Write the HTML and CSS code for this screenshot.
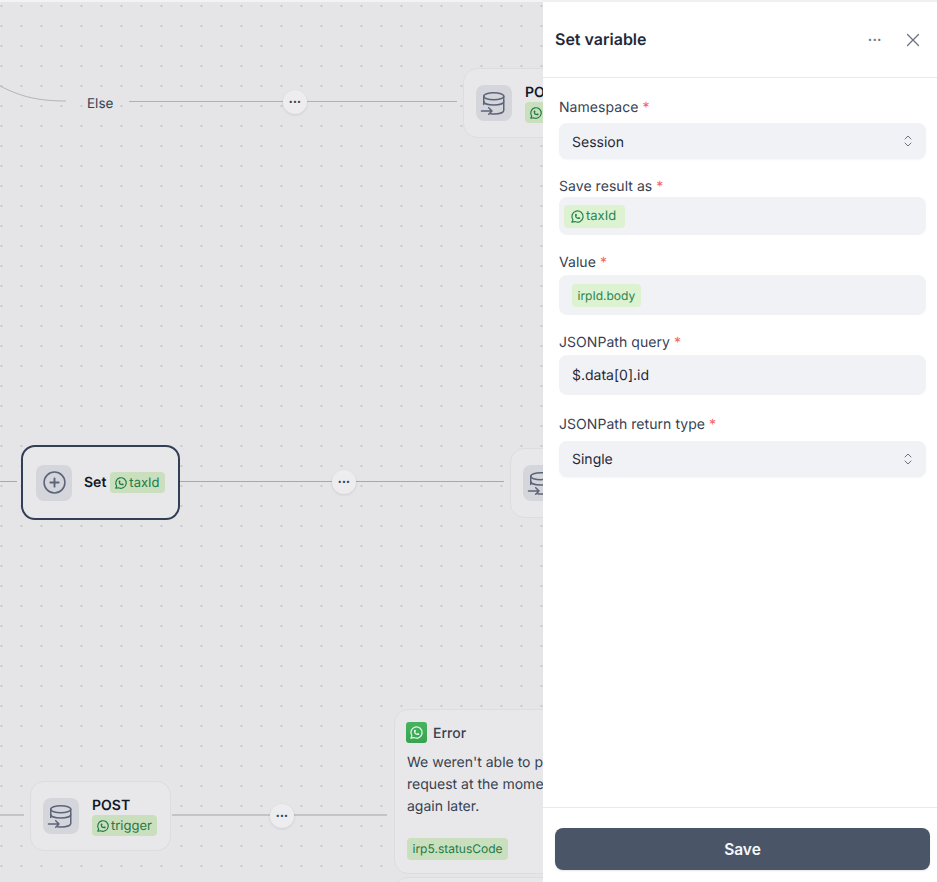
FILE: index.html
```html
<!DOCTYPE html>
<html lang="en">
<head>
<meta charset="utf-8">
<title>Set variable</title>
<link rel="stylesheet" href="styles.css">
</head>
<body>
<svg class="defs" width="0" height="0" aria-hidden="true">
  <symbol id="wa" viewBox="0 0 24 24" fill="none" stroke="currentColor" stroke-width="2" stroke-linecap="round" stroke-linejoin="round">
    <path d="M3 21l1.65-3.8a9 9 0 1 1 3.4 2.9L3 21"/>
    <path d="M9 10a.5.5 0 0 0 1 0V9a.5.5 0 0 0-1 0v1a5 5 0 0 0 5 5h1a.5.5 0 0 0 0-1h-1a.5.5 0 0 0 0 1"/>
  </symbol>
  <symbol id="db" viewBox="0 0 28 28" fill="none" stroke="currentColor" stroke-width="1.500" stroke-linecap="round" stroke-linejoin="round">
    <ellipse cx="13.750" cy="7.200" rx="10" ry="3.500"/>
    <path d="M3.750 7.200v8.300"/>
    <path d="M3.750 12.500c0 2.100 4.500 3.500 10 3.500s10-1.400 10-3.500"/>
    <path d="M23.750 7.200v14.300c0 2.100-4.500 3.500-10 3.500-1.100 0-2.200-.1-3.200-.2"/>
    <path d="M1.500 22h10.500M8.700 18.700l3.300 3.300-3.300 3.300"/>
  </symbol>
  <symbol id="updown" viewBox="0 0 12 16" fill="none" stroke="currentColor" stroke-width="1" stroke-linecap="round" stroke-linejoin="round">
    <path d="M3 6l3-3 3 3M3 10l3 3 3-3"/>
  </symbol>
</svg>
<div class="app">
  <main class="canvas">
    <svg class="wire-curve" width="70" height="30" viewBox="0 0 70 30" aria-hidden="true"><path d="M0 4C18 13 34 19 66 19" fill="none" stroke="#b4b4b9" stroke-width="1"/></svg>
    <span class="else">Else</span>
    <div class="wire wire-else"></div>
    <button class="dots-btn dots-else">&bull;&bull;&bull;</button>

    <div class="node node-post-top">
      <span class="icon-box"><svg class="db-icon"><use href="#db"/></svg></span>
      <div class="node-text"><strong class="node-title">POST</strong><span class="pill pill-dim pill-clipped"><svg class="wa-icon"><use href="#wa"/></svg></span></div>
    </div>

    <div class="wire wire-set-left"></div>
    <div class="node node-set">
      <span class="icon-box"><svg class="plus-icon" viewBox="0 0 24 24" fill="none" stroke="currentColor" stroke-width="1.500" stroke-linecap="round"><circle cx="12" cy="12" r="10"/><path d="M12 8v8M8 12h8" stroke-width="1.800"/></svg></span>
      <strong class="node-title">Set</strong>
      <span class="pill pill-dim"><svg class="wa-icon"><use href="#wa"/></svg>taxId</span>
    </div>
    <div class="wire wire-set"></div>
    <button class="dots-btn dots-set">&bull;&bull;&bull;</button>
    <div class="node node-right">
      <span class="icon-box"><svg class="db-icon"><use href="#db"/></svg></span>
    </div>

    <div class="wire wire-thick wire-post-left"></div>
    <div class="node node-post">
      <span class="icon-box"><svg class="db-icon"><use href="#db"/></svg></span>
      <div class="node-text"><strong class="node-title">POST</strong><span class="pill pill-dim"><svg class="wa-icon"><use href="#wa"/></svg>trigger</span></div>
    </div>
    <div class="wire wire-thick wire-post"></div>
    <button class="dots-btn dots-post">&bull;&bull;&bull;</button>

    <div class="node node-error">
      <div class="error-head">
        <span class="wa-badge"><svg class="wa-badge-icon"><use href="#wa"/></svg></span>
        <span class="error-title">Error</span>
      </div>
      <p class="error-body">We weren't able to process your request at the moment. Please try again later.</p>
      <span class="pill pill-dim pill-var">irp5.statusCode</span>
    </div>
    <div class="node node-next"></div>
  </main>

  <aside class="panel">
    <header class="panel-head">
      <h1 class="panel-title">Set variable</h1>
      <button class="head-btn head-dots">&bull;&bull;&bull;</button>
      <button class="head-btn head-close" aria-label="Close"><svg width="18" height="18" viewBox="0 0 18 18" fill="none" stroke="currentColor" stroke-width="1.300" stroke-linecap="round"><path d="M3.500 3.500l11 11M14.500 3.500l-11 11"/></svg></button>
    </header>
    <form class="panel-body">
      <label class="label label-first">Namespace <em>*</em></label>
      <div class="control control-select control-session"><span>Session</span><svg class="updown"><use href="#updown"/></svg></div>
      <label class="label label-save">Save result as <em>*</em></label>
      <div class="control control-tags control-save"><span class="pill"><svg class="wa-icon"><use href="#wa"/></svg>taxId</span></div>
      <label class="label label-value">Value <em>*</em></label>
      <div class="control control-tall control-value"><span class="pill pill-var">irpId.body</span></div>
      <label class="label label-value">JSONPath query <em>*</em></label>
      <div class="control control-tall">$.data[0].id</div>
      <label class="label label-return">JSONPath return type <em>*</em></label>
      <div class="control control-select"><span>Single</span><svg class="updown"><use href="#updown"/></svg></div>
    </form>
    <footer class="panel-foot">
      <button class="save-btn">Save</button>
    </footer>
  </aside>
</div>
</body>
</html>
```
FILE: styles.css
```css
* { box-sizing: border-box; }
html, body { margin: 0; height: 100%; }
body { font-family: Inter, "Liberation Sans", sans-serif; color: #1f2937; background: #fff; overflow: hidden; text-rendering: geometricPrecision; }
button { font: inherit; border: 0; padding: 0; cursor: pointer; }
.defs { position: absolute; }
.app { display: flex; height: 882px; }

/* free canvas */
.canvas {
  position: relative; width: 543px; flex: none; overflow: hidden;
  background-color: #e5e5e8;
  background-image: radial-gradient(circle at 1px 1px, #c9cacf 0.9px, transparent 1px);
  background-size: 20px 20px;
  background-position: 0.5px 3px;
  border-top: 2px solid #f3f3f5;
}
.wire-curve { position: absolute; left: 0; top: 80px; }
.else { position: absolute; left: 87px; top: 94px; font-size: 13.500px; line-height: 16px; color: #374151; }
.wire { position: absolute; height: 1px; background: #a6a7ac; }
.wire-thick { height: 2px; background: #c3c4c8; }
.wire-else { left: 129px; width: 328px; top: 99px; background: #b0b1b6; }
.wire-set-left { left: 0; width: 17px; top: 479px; }
.wire-set { left: 180px; width: 324px; top: 479px; }
.wire-post-left { left: 0; width: 24px; top: 812px; }
.wire-post { left: 172px; width: 215px; top: 812px; }

.dots-btn {
  position: absolute; width: 24px; height: 24px; border-radius: 50%;
  background: #ededf0; color: #374151; font-size: 7px; line-height: 24px; letter-spacing: 0.300px; text-align: center;
  box-shadow: 0 1px 3px rgba(0,0,0,.1);
}
.dots-else { left: 283px; top: 88px; }
.dots-set { left: 332px; top: 468px; }
.dots-post { left: 270px; top: 802px; }

.node {
  position: absolute; display: flex; align-items: center;
  background: #e8e8ea; border: 1px solid #dcdde1; border-radius: 14px; padding: 0 12px;
}
.icon-box { flex: none; width: 36px; height: 36px; border-radius: 8px; background: #d5d6dc; color: #5b6478; display: flex; align-items: center; justify-content: center; }
.db-icon { width: 28px; height: 28px; }
.plus-icon { width: 25px; height: 25px; }
.node-text { display: flex; flex-direction: column; align-items: flex-start; margin-left: 13px; gap: 1px; }
.node-title { font-size: 14px; line-height: 18px; font-weight: 600; color: #111827; white-space: nowrap; }
.node-text .node-title { margin: 1px 0 -1px; }
.node-post-top { left: 463px; top: 66px; width: 200px; height: 70px; }
.node-set { left: 21px; top: 443px; width: 159px; height: 75px; border: 2px solid #333f55; padding-left: 13px; }
.node-set .node-title { margin-left: 12px; margin-right: 4px; }
.node-right { left: 510px; top: 446px; width: 200px; height: 70px; }
.node-post { left: 30px; top: 779px; width: 141px; height: 70px; }
.node-error { left: 394px; top: 707px; width: 290px; height: 165px; display: block; padding: 12px; }
.node-next { left: 394px; top: 875px; width: 290px; height: 40px; }

.error-head { display: flex; align-items: center; gap: 6px; height: 22px; margin: -1px 0 0 -1px; }
.wa-badge { width: 21px; height: 21px; border-radius: 3px; background: linear-gradient(#45b45f, #36a350); color: #e8f6ea; display: flex; align-items: center; justify-content: center; }
.wa-badge-icon { width: 15px; height: 15px; }
.error-title { font-size: 14px; font-weight: 500; color: #374151; margin-top: 2px; }
.error-body { margin: 9px 0 19px; width: 250px; font-size: 14px; line-height: 22px; color: #374151; }

.pill {
  display: inline-flex; align-items: center; height: 23px; padding: 0 9px 0 5.500px; gap: 1.500px;
  background: #dcf2d0; color: #2a8550; border-radius: 4px; font-size: 13px; white-space: nowrap;
}
.pill .wa-icon { width: 15px; height: 15px; }
.pill-dim { background: #c9dfbd; color: #1f7a45; height: 21px; padding: 0 5px 0 4px; gap: 1px; }
.pill-dim .wa-icon { width: 14px; height: 14px; }
.pill-clipped { width: 60px; }
.pill-var { font-size: 12px; padding: 0 5.500px; }
.pill-dim.pill-var { height: 22px; font-size: 12px; padding: 0 5.500px; }
.wa-icon { flex: none; }

/* panel */
.panel { flex: 1; display: flex; flex-direction: column; background: #fff; min-width: 0; border-top: 2px solid #f0f0f2; z-index: 1; }
.panel-head { flex: none; height: 76px; display: flex; align-items: center; padding-left: 12px; border-bottom: 1px solid #e8e9ec; }
.panel-title { margin: 0 0 2px; flex: 1; font-size: 16px; font-weight: 600; color: #1f2937; }
.head-btn { background: none; color: #6b7280; display: flex; align-items: center; justify-content: center; }
.head-dots { font-size: 7px; letter-spacing: 0.800px; width: 24px; height: 24px; margin-right: 14px; }
.head-close { width: 24px; height: 24px; margin-right: 12px; }

.panel-body { flex: 1; padding: 0 11px 0 16px; }
.label { display: block; font-size: 14px; line-height: 20px; color: #374151; letter-spacing: 0.050px; }
.label em { font-style: normal; color: #f56565; }
.label-first { margin-top: 20px; margin-bottom: 5px; }
.label-save { margin-top: 18px; margin-bottom: 0; }
.label-value { margin-top: 18px; margin-bottom: 2px; }
.label-return { margin-top: 20px; margin-bottom: 6px; }
.control { display: flex; align-items: center; border-radius: 8px; background: #f1f2f6; font-size: 14px; color: #1f2937; padding: 0 13px; }
.control-select { height: 36px; justify-content: space-between; box-shadow: 0 1px 2px rgba(0,0,0,.04); padding-right: 12px; }
.control-session span { margin-top: 2px; }
.control-tags { height: 38px; padding-left: 5px; }
.control-tall { height: 40px; }
.updown { width: 12px; height: 16px; color: #6b7280; }
.panel-foot { flex: none; height: 75px; border-top: 1px solid #e8e9ec; padding: 20px 7px 0 12px; }
.save-btn { display: block; width: 100%; height: 42px; border-radius: 8px; background: #4a5568; color: #f7f8fa; font-size: 15.500px; font-weight: 600; box-shadow: 0 1px 2px rgba(0,0,0,.1); }
```
